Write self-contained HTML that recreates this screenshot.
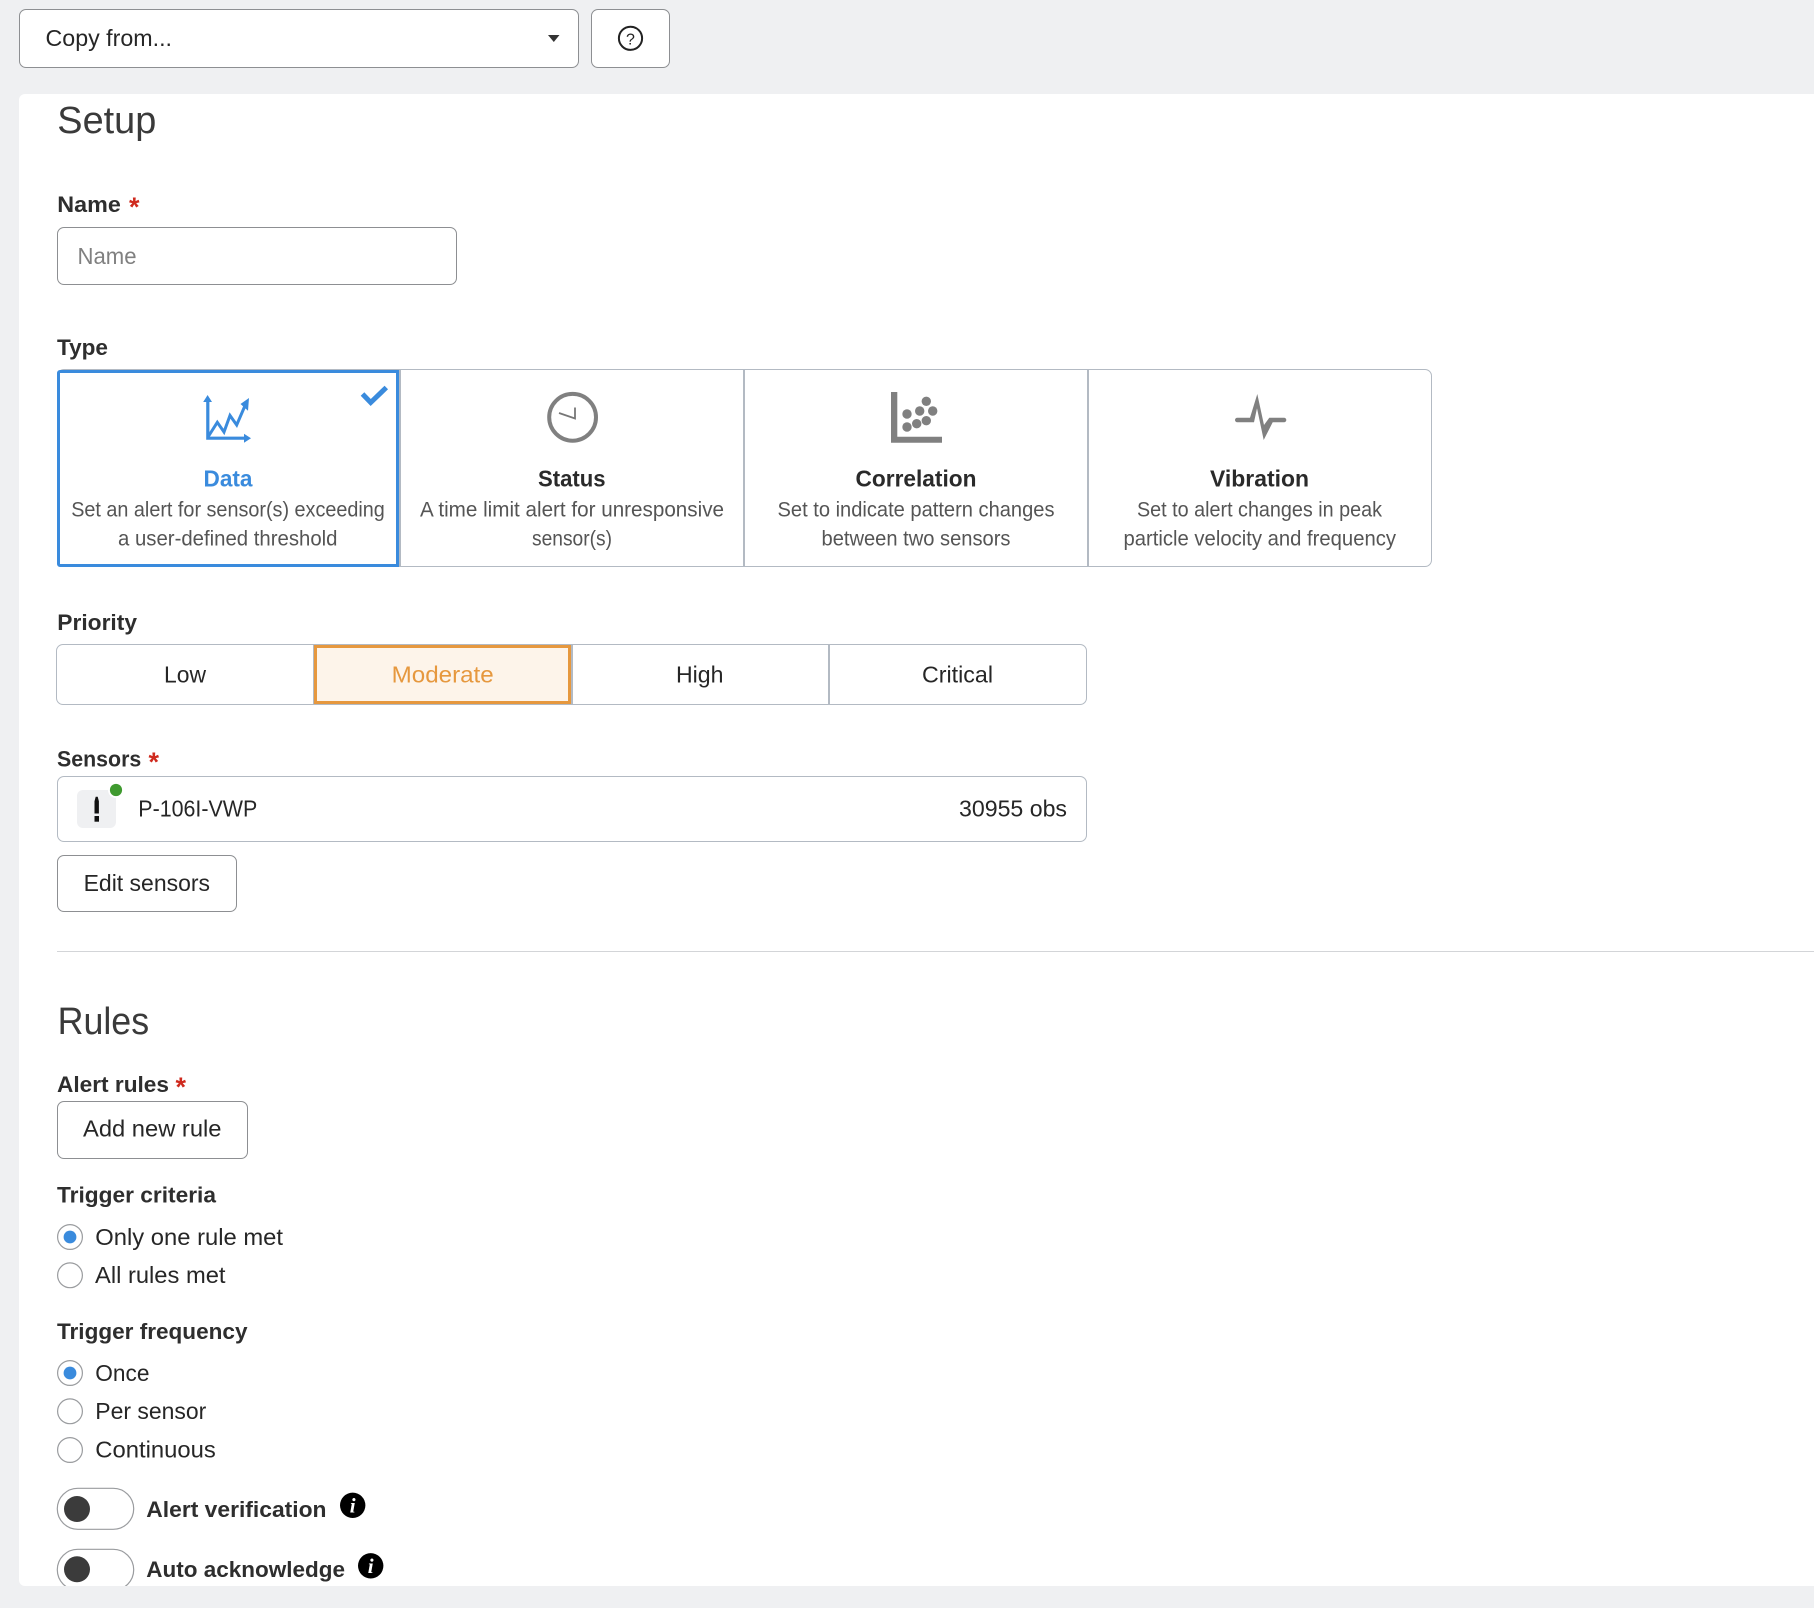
<!DOCTYPE html>
<html lang="en"><head><meta charset="utf-8"><title>Alert setup</title>
<style>
html,body{margin:0;padding:0;width:1814px;height:1608px;overflow:hidden;background:#eff0f2}
body{position:relative;font-family:"Liberation Sans",sans-serif}
.b{position:absolute;box-sizing:border-box;background:#fff;border:1.2px solid #8d8f92;border-radius:7px}
.g{border-color:#b3bac3}
.v{position:absolute;width:2px;background:#b3bac3}
#card{position:absolute;left:18.7px;top:94px;width:1796px;height:1492px;background:#fff;border-radius:6px 0 0 6px}
svg{position:absolute;left:0;top:0}
text{font-family:"Liberation Sans",sans-serif;fill:#262626}
.h{font-size:38px;fill:#3a3a3a}
.l{font-size:22.5px;font-weight:700;fill:#2e2e2e}
.t{font-size:23px}
.d{font-size:21px;fill:#555}
.ti{font-size:23.5px;font-weight:700;fill:#2a2a2a}
.r{font-size:27px;font-weight:700;fill:#cf2a1e}
</style></head><body>
<div id="card"></div>
<div class="b" style="left:19px;top:9.3px;width:559.5px;height:58.5px"></div>
<div class="b" style="left:591px;top:9.3px;width:78.5px;height:58.5px"></div>
<div class="b" style="left:57px;top:227px;width:399.7px;height:57.7px"></div>

<div class="b g" style="left:57px;top:369.3px;width:1375px;height:197.5px"></div>
<div class="v" style="left:399px;top:369.5px;height:197.3px"></div>
<div class="v" style="left:743px;top:369.5px;height:197.3px"></div>
<div class="v" style="left:1087px;top:369.5px;height:197.3px"></div>
<div class="b" style="left:57px;top:369.5px;width:342px;height:197px;border:3px solid #3a8bdd;border-radius:3px 0 0 3px;background:#fff"></div>

<div class="b g" style="left:56.3px;top:644.3px;width:1030.7px;height:60.7px"></div>
<div class="v" style="left:828px;top:644.5px;height:60.5px"></div>
<div class="v" style="left:313px;top:644.5px;height:60.5px"></div>
<div class="v" style="left:570.5px;top:644.5px;height:60.5px"></div>
<div class="b" style="left:314.3px;top:645px;width:257px;height:59px;border:3px solid #e6983e;border-radius:0;background:#fdf4ea"></div>

<div class="b g" style="left:57px;top:776.3px;width:1030px;height:65.5px"></div>
<div style="position:absolute;left:77px;top:790px;width:39px;height:38px;background:#eff0f2;border-radius:6px"></div>
<div class="b" style="left:57px;top:855.3px;width:180px;height:56.4px"></div>
<div style="position:absolute;left:57px;top:951px;width:1757px;height:1.3px;background:#d3d5d8"></div>
<div class="b" style="left:57px;top:1101.3px;width:190.7px;height:57.4px"></div>

<svg width="1814" height="1608" viewBox="0 0 1814 1608" xmlns="http://www.w3.org/2000/svg">
<text class="t" x="45.5" y="46" textLength="126.5" lengthAdjust="spacingAndGlyphs">Copy from...</text>
<path d="M548 35h11.5l-5.7 7z" fill="#333"/>
<circle cx="630.5" cy="38.3" r="11.6" fill="none" stroke="#222" stroke-width="2"/>
<text x="630.5" y="44.5" text-anchor="middle" style="font-size:16px;fill:#222">?</text>

<text class="h" x="57.3" y="133" textLength="99" lengthAdjust="spacingAndGlyphs">Setup</text>
<text class="l" x="57.3" y="212" textLength="63.5" lengthAdjust="spacingAndGlyphs">Name</text>
<text class="r" x="129" y="216">*</text>
<text class="t" x="77.5" y="264" textLength="59" lengthAdjust="spacingAndGlyphs" style="fill:#808080">Name</text>

<text class="l" x="57" y="355" textLength="51" lengthAdjust="spacingAndGlyphs">Type</text>

<!-- Data icon -->
<g fill="none" stroke="#3a8bdd">
<path d="M207.8 400V438.2H246" stroke-width="3.2"/>
<path d="M208 437L217.3 422.3 224 432 230 415.5 236.7 425 245.5 404.5" stroke-width="3"/>
</g>
<g fill="#3a8bdd">
<path d="M207.6 395l-4.4 7h8.8z"/>
<path d="M251 438.3l-7-4.5v9z"/>
<path d="M249 398l-8.5 6 7.5 6.7z"/>
</g>
<path d="M362.5 394l8.2 8.5 15.6-15" fill="none" stroke="#3a8bdd" stroke-width="5"/>
<!-- Clock -->
<circle cx="572.6" cy="417.3" r="23.4" fill="none" stroke="#808080" stroke-width="4"/>
<path d="M559 413L575 418.5V407.5" fill="none" stroke="#777" stroke-width="1.8"/>
<!-- Correlation -->
<path d="M891 392h6.3v44.7H942v6H891z" fill="#808080"/>
<g fill="#808080">
<circle cx="926.3" cy="401.3" r="4.7"/><circle cx="907" cy="414" r="4.7"/><circle cx="919.7" cy="411" r="4.7"/><circle cx="932.7" cy="411" r="4.7"/><circle cx="926.3" cy="420.7" r="4.7"/><circle cx="916.7" cy="423.7" r="4.7"/><circle cx="907" cy="427" r="4.7"/>
</g>
<!-- Vibration -->
<path d="M1237.3 417.7H1250L1257.3 394 1264 425 1269.3 417.7H1284A2.3 2.3 0 0 1 1284 422.3H1272.7L1263.7 440 1257 408.3 1254 422.3H1237.3A2.3 2.3 0 0 1 1237.3 417.7Z" fill="#808080"/>

<text class="ti" x="203.5" y="486.7" textLength="49" lengthAdjust="spacingAndGlyphs" style="fill:#3a8bdd">Data</text>
<text class="d" x="71.2" y="516.5" textLength="313.6" lengthAdjust="spacingAndGlyphs">Set an alert for sensor(s) exceeding</text>
<text class="d" x="118" y="545.3" textLength="219.5" lengthAdjust="spacingAndGlyphs">a user-defined threshold</text>
<text class="ti" x="538" y="486.7" textLength="67.6" lengthAdjust="spacingAndGlyphs">Status</text>
<text class="d" x="420" y="516.5" textLength="304" lengthAdjust="spacingAndGlyphs">A time limit alert for unresponsive</text>
<text class="d" x="532" y="545.3" textLength="80" lengthAdjust="spacingAndGlyphs">sensor(s)</text>
<text class="ti" x="855.5" y="486.7" textLength="121" lengthAdjust="spacingAndGlyphs">Correlation</text>
<text class="d" x="777.5" y="516.5" textLength="277" lengthAdjust="spacingAndGlyphs">Set to indicate pattern changes</text>
<text class="d" x="821.5" y="545.3" textLength="189" lengthAdjust="spacingAndGlyphs">between two sensors</text>
<text class="ti" x="1210" y="486.7" textLength="99" lengthAdjust="spacingAndGlyphs">Vibration</text>
<text class="d" x="1137" y="516.5" textLength="245" lengthAdjust="spacingAndGlyphs">Set to alert changes in peak</text>
<text class="d" x="1123.5" y="545.3" textLength="272.5" lengthAdjust="spacingAndGlyphs">particle velocity and frequency</text>

<text class="l" x="57.3" y="630" textLength="79.7" lengthAdjust="spacingAndGlyphs">Priority</text>
<text class="t" x="164" y="682.7" textLength="42" lengthAdjust="spacingAndGlyphs">Low</text>
<text class="t" x="391.7" y="682.7" textLength="102" lengthAdjust="spacingAndGlyphs" style="fill:#e6983e">Moderate</text>
<text class="t" x="676" y="682.7" textLength="47.5" lengthAdjust="spacingAndGlyphs">High</text>
<text class="t" x="922" y="682.7" textLength="71" lengthAdjust="spacingAndGlyphs">Critical</text>

<text class="l" x="57" y="766.7" textLength="84.3" lengthAdjust="spacingAndGlyphs">Sensors</text>
<text class="r" x="148.5" y="771">*</text>

<path d="M95.7 796.7h2l1.2 4.5v12.3h-4.4v-12.3z" fill="#111"/>
<rect x="94.5" y="816" width="4.5" height="5.7" fill="#111"/>
<circle cx="116" cy="790" r="8" fill="#fff"/>
<circle cx="116" cy="790" r="6.1" fill="#3f9a2f"/>
<text class="t" x="138.3" y="816.7" textLength="119" lengthAdjust="spacingAndGlyphs">P-106I-VWP</text>
<text class="t" x="959" y="816.7" textLength="108" lengthAdjust="spacingAndGlyphs">30955 obs</text>
<text class="t" x="83.6" y="891" textLength="126.4" lengthAdjust="spacingAndGlyphs">Edit sensors</text>

<text class="h" x="57.6" y="1034" textLength="91.5" lengthAdjust="spacingAndGlyphs">Rules</text>
<text class="l" x="57" y="1092" textLength="112" lengthAdjust="spacingAndGlyphs">Alert rules</text>
<text class="r" x="175.5" y="1096">*</text>
<text class="t" x="83" y="1136.7" textLength="138.5" lengthAdjust="spacingAndGlyphs">Add new rule</text>

<text class="l" x="57" y="1202.7" textLength="159" lengthAdjust="spacingAndGlyphs">Trigger criteria</text>
<g fill="#fff" stroke="#9a9c9f" stroke-width="1.2">
<circle cx="70" cy="1237" r="12.4"/><circle cx="70" cy="1275.3" r="12.4"/><circle cx="70" cy="1373" r="12.4"/><circle cx="70" cy="1411.3" r="12.4"/><circle cx="70" cy="1450" r="12.4"/>
</g>
<circle cx="70" cy="1237" r="6.4" fill="#3a8bdd"/>
<circle cx="70" cy="1373" r="6.4" fill="#3a8bdd"/>
<text class="t" x="95.3" y="1245" textLength="187.7" lengthAdjust="spacingAndGlyphs">Only one rule met</text>
<text class="t" x="95" y="1283" textLength="130.5" lengthAdjust="spacingAndGlyphs">All rules met</text>
<text class="l" x="57" y="1339" textLength="190.5" lengthAdjust="spacingAndGlyphs">Trigger frequency</text>
<text class="t" x="95.3" y="1381" textLength="54.2" lengthAdjust="spacingAndGlyphs">Once</text>
<text class="t" x="95.3" y="1419" textLength="111" lengthAdjust="spacingAndGlyphs">Per sensor</text>
<text class="t" x="95.3" y="1457.7" textLength="120.5" lengthAdjust="spacingAndGlyphs">Continuous</text>

<rect x="57.3" y="1488.3" width="76.4" height="41" rx="20.5" fill="#fff" stroke="#9a9c9f" stroke-width="1.2"/>
<circle cx="77" cy="1509" r="13" fill="#3b3b3b"/>
<text class="l" x="146.3" y="1516.8" textLength="180.2" lengthAdjust="spacingAndGlyphs">Alert verification</text>
<circle cx="352.7" cy="1505.3" r="12.7" fill="#000"/>
<text x="352.7" y="1512.3" text-anchor="middle" style="font-family:'Liberation Serif',serif;font-size:21px;font-weight:700;font-style:italic;fill:#fff">i</text>

<rect x="57.3" y="1549.3" width="76.4" height="41" rx="20.5" fill="#fff" stroke="#9a9c9f" stroke-width="1.2"/>
<circle cx="77" cy="1569.3" r="13" fill="#3b3b3b"/>
<text class="l" x="146.3" y="1576.8" textLength="198.7" lengthAdjust="spacingAndGlyphs">Auto acknowledge</text>
<circle cx="370.7" cy="1565.8" r="12.7" fill="#000"/>
<text x="370.7" y="1572.8" text-anchor="middle" style="font-family:'Liberation Serif',serif;font-size:21px;font-weight:700;font-style:italic;fill:#fff">i</text>
<rect x="0" y="1586" width="1814" height="22" fill="#eff0f2"/>
</svg>
</body></html>
